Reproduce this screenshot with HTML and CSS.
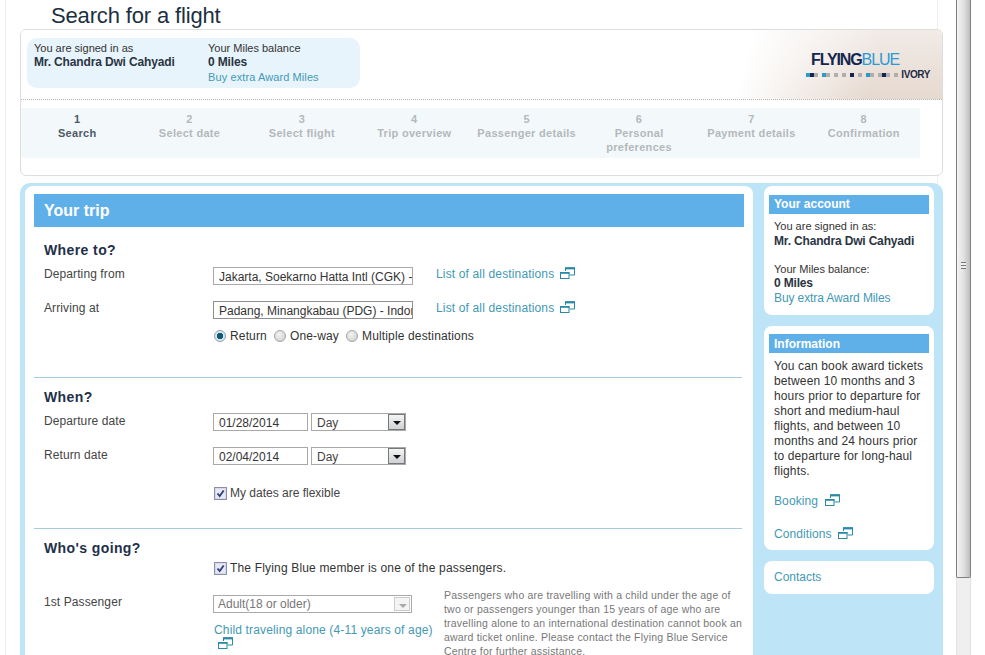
FILE: index.html
```html
<!DOCTYPE html>
<html lang="en">
<head>
<meta charset="utf-8">
<title>Search for a flight</title>
<link rel="stylesheet" href="styles.css">
</head>
<body>
<svg class="defs" width="0" height="0"><defs>
  <g id="win" fill="none" stroke="#2a8aa6">
    <path d="M5.5 4V1h9v7H9.5" />
    <path d="M5 1.3h10" stroke-width="2.2"/>
    <rect x="0.5" y="5.5" width="8.5" height="6"/>
    <path d="M0 6h9.5" stroke-width="1.6"/>
  </g>
  <g id="cb">
    <rect x="0.5" y="0.5" width="12" height="12" fill="#d5d9ee" stroke="#8b90a8"/>
    <rect x="2" y="2" width="9" height="9" fill="#e6e8f5"/>
    <path d="M3.5 6.5l2.2 2.6 4-5.6" fill="none" stroke="#2c3f78" stroke-width="1.8"/>
  </g>
</defs></svg>
<div class="page">
  <h1 class="title">Search for a flight</h1>
  <div class="content">
    <section class="head-card">
      <div class="head-top">
        <div class="pill">
          <div class="pill-col name-col">
            <div>You are signed in as</div>
            <strong>Mr. Chandra Dwi Cahyadi</strong>
          </div>
          <div class="pill-col">
            <div>Your Miles balance</div>
            <strong>0 Miles</strong>
            <a class="link">Buy extra Award Miles</a>
          </div>
        </div>
        <div class="logo">
          <div class="logo-word"><span class="fly">FLYING</span><span class="blue">BLUE</span></div>
          <div class="logo-line">
            <div class="dots">
              <i class="d2"></i><i class="d4"></i><i class="d3"></i><b></b>
              <i class="d2"></i><i class="d3"></i><b></b>
              <i class="d3"></i><b></b>
              <i class="d3"></i><b></b>
              <i class="d4"></i><b></b>
              <i class="d3"></i><b></b>
              <i class="d2"></i><i class="d3"></i><b></b>
              <i class="d3"></i><i class="d4"></i><i class="d3"></i><b></b>
              <i class="d3"></i>
            </div>
            <span class="ivory">IVORY</span>
          </div>
        </div>
      </div>
      <ol class="steps">
        <li class="step current"><span>1</span><span>Search</span></li>
        <li class="step"><span>2</span><span>Select date</span></li>
        <li class="step"><span>3</span><span>Select flight</span></li>
        <li class="step"><span>4</span><span>Trip overview</span></li>
        <li class="step"><span>5</span><span>Passenger details</span></li>
        <li class="step"><span>6</span><span>Personal preferences</span></li>
        <li class="step"><span>7</span><span>Payment details</span></li>
        <li class="step"><span>8</span><span>Confirmation</span></li>
      </ol>
    </section>

    <section class="panel">
      <main class="trip">
        <h2 class="trip-bar">Your trip</h2>

        <div class="sec first">
          <h3>Where to?</h3>
          <div class="row r1">
            <label class="lab">Departing from</label>
            <input class="txt wide" readonly value="Jakarta, Soekarno Hatta Intl (CGK) - Indonesia">
            <a class="link dest">List of all destinations<svg class="win" width="15" height="12"><use href="#win"/></svg></a>
          </div>
          <div class="row r2">
            <label class="lab">Arriving at</label>
            <input class="txt wide dark" readonly value="Padang, Minangkabau (PDG) - Indonesia">
            <a class="link dest">List of all destinations<svg class="win" width="15" height="12"><use href="#win"/></svg></a>
          </div>
          <div class="opts">
            <span class="opt"><i class="radio on"></i>Return</span>
            <span class="opt"><i class="radio"></i>One-way</span>
            <span class="opt"><i class="radio"></i>Multiple destinations</span>
          </div>
        </div>

        <div class="sec when">
          <h3>When?</h3>
          <div class="row d1r">
            <label class="lab">Departure date</label>
            <input class="txt date" readonly value="01/28/2014">
            <div class="sel day"><span>Day</span><i class="arrow"></i></div>
          </div>
          <div class="row d2r">
            <label class="lab">Return date</label>
            <input class="txt date" readonly value="02/04/2014">
            <div class="sel day"><span>Day</span><i class="arrow"></i></div>
          </div>
          <div class="check-row"><svg class="cb" width="13" height="13"><use href="#cb"/></svg>My dates are flexible</div>
        </div>

        <div class="sec who">
          <h3>Who's going?</h3>
          <div class="check-row member"><svg class="cb" width="13" height="13"><use href="#cb"/></svg>The Flying Blue member is one of the passengers.</div>
          <div class="pass">
            <label class="lab">1st Passenger</label>
            <div class="pass-ctl">
              <div class="sel adult"><span>Adult(18 or older)</span><i class="arrow off"></i></div>
              <a class="link child">Child traveling alone (4-11 years of age) <svg class="win" width="15" height="12"><use href="#win"/></svg></a>
            </div>
            <p class="note">Passengers who are travelling with a child under the age of two or passengers younger than 15 years of age who are travelling alone to an international destination cannot book an award ticket online. Please contact the Flying Blue Service Centre for further assistance.</p>
          </div>
        </div>
      </main>

      <aside class="side">
        <div class="card account">
          <h4>Your account</h4>
          <div class="card-body">
            <div>You are signed in as:</div>
            <strong>Mr. Chandra Dwi Cahyadi</strong>
            <div class="gap">Your Miles balance:</div>
            <strong>0 Miles</strong>
            <a class="link">Buy extra Award Miles</a>
          </div>
        </div>
        <div class="card info">
          <h4>Information</h4>
          <div class="card-body">
            <p>You can book award tickets between 10 months and 3 hours prior to departure for short and medium-haul flights, and between 10 months and 24 hours prior to departure for long-haul flights.</p>
            <a class="link ext">Booking <svg class="win" width="15" height="12"><use href="#win"/></svg></a>
            <a class="link ext">Conditions <svg class="win" width="15" height="12"><use href="#win"/></svg></a>
          </div>
        </div>
        <div class="card contacts"><a class="link">Contacts</a></div>
      </aside>
    </section>
  </div>
</div>
<div class="scrollbar">
  <div class="thumb"><span class="grip"></span></div>
</div>
</body>
</html>
```
FILE: styles.css
```css
* { box-sizing: border-box; }
html, body { margin: 0; padding: 0; }
body {
  width: 985px;
  height: 655px;
  overflow: hidden;
  display: flex;
  background: #fff;
  font-family: "Liberation Sans", Arial, sans-serif;
  font-size: 12px;
  line-height: 16px;
  color: #333;
}
.defs { position: absolute; }
.page {
  width: 933px;
  height: 655px;
  margin-left: 5px;
  padding-left: 14px;
  border-left: 1px solid #eee;
  border-right: 1px solid #eee;
  flex: none;
}
.title {
  margin: 0 0 0 31px;
  height: 29px;
  padding-top: 3px;
  font-weight: 400;
  font-size: 22px;
  line-height: 25px;
  letter-spacing: -.15px;
  color: #1c2f42;
}
.content { width: 923px; }
.link { color: #4399b4; }
strong { font-weight: 700; color: #2a3442; }

/* header card */
.head-card {
  height: 147px;
  border: 1px solid #ddd;
  border-radius: 6px;
  background: #fff;
  overflow: hidden;
}
.head-top {
  height: 70px;
  display: flex;
  justify-content: space-between;
  border-bottom: 1px dotted #b5b5b5;
  background: linear-gradient(105deg, #fff 78%, rgba(255,255,255,0) 92%), linear-gradient(to bottom, #f1ebe7, #e6d9cf);
}
.pill {
  width: 333px;
  height: 50px;
  margin: 8px 0 0 6px;
  padding: 3px 7px;
  display: flex;
  border-radius: 10px;
  background: #e8f4fc;
  line-height: 15px;
}
.pill-col { display: flex; flex-direction: column; font-size: 11px; }
.pill-col strong { font-size: 12px; letter-spacing: -.15px; margin-top: -1px; line-height: 15px; }
.pill-col .link { font-size: 11px; letter-spacing: .1px; }
.name-col { width: 174px; }
.logo {
  width: 125px;
  margin-right: 12px;
  padding-top: 21px;
  display: flex;
  flex-direction: column;
  align-items: flex-end;
}
.logo-word {
  width: 119px;
  font-size: 16px;
  line-height: 17px;
  letter-spacing: -1.1px;
  white-space: nowrap;
}
.fly { color: #14264f; font-weight: 700; }
.blue { color: #2a9ad6; }
.logo-line { display: flex; align-items: center; margin-top: 1px; height: 11px; }
.dots { display: flex; align-items: center; margin-right: 3px; }
.dots i, .dots b { display: block; height: 4px; width: 4px; }
.d2 { background: #2d9cc4; }
.d3 { background: #b0aeac; }
.d4 { background: #14264f; }
.ivory { font-size: 10px; font-weight: 700; letter-spacing: -.4px; color: #1e2a44; line-height: 11px; }

/* steps */
.steps {
  list-style: none;
  width: 899px;
  height: 50px;
  margin: 8px 0 0;
  padding: 4px 0 0;
  display: grid;
  grid-template-columns: repeat(8, 1fr);
  background: #f3f8fb;
}
.step {
  display: flex;
  flex-direction: column;
  align-items: center;
  text-align: center;
  font-size: 11px;
  font-weight: 700;
  line-height: 14px;
  letter-spacing: .3px;
  color: #b4b8bb;
  padding: 0 4px;
}
.step.current { color: #4d5a66; }

/* main panel */
.panel {
  height: 473px;
  margin-top: 7px;
  padding: 3px 9px 0 5px;
  display: flex;
  gap: 11px;
  border-radius: 10px 10px 0 0;
  background: #bde4f7;
}
.trip {
  width: 728px;
  height: 480px;
  padding: 8px 9px 0;
  background: #fff;
  border-radius: 8px;
}
.trip-bar {
  margin: 0;
  height: 33px;
  padding-left: 10px;
  background: #5fb0e8;
  color: #fff;
  font-size: 16px;
  line-height: 33px;
}
.sec { padding-left: 10px; margin-right: 2px; }
.sec h3 { margin: 0; font-size: 14px; line-height: 16px; color: #22304a; letter-spacing: .4px; }
.sec.first { padding-top: 15px; }
.sec.when, .sec.who { border-top: 1px solid #a5cde0; padding-top: 11px; }
.sec.when { margin-top: 33px; }
.sec.who { margin-top: 27px; }
.row { display: flex; align-items: flex-start; }
.lab { width: 169px; flex: none; color: #444; letter-spacing: .1px; }
.r1 { margin-top: 8px; height: 34px; }
.r2 { height: 28px; }
.txt {
  display: block;
  margin: 1px 0 0;
  height: 18px;
  padding: 1px 0 0 5px;
  border: 1px solid #a9a9a9;
  background: #fff;
  font: 12px/16px "Liberation Sans", Arial, sans-serif;
  color: #333;
  border-radius: 0;
  outline: 0;
}
.wide { width: 200px; }
.wide.dark { border-color: #8f8f8f; }
.dest { margin-left: 23px; display: flex; align-items: center; gap: 6px; letter-spacing: .15px; }
.win { flex: none; vertical-align: -1px; }
.dest .win { margin-top: -3px; }
.opts { display: flex; height: 16px; padding-left: 170px; gap: 7px; letter-spacing: .15px; }
.opt { display: flex; align-items: center; gap: 4px; }
.radio {
  display: block;
  width: 12px;
  height: 12px;
  border-radius: 50%;
  border: 1px solid #a5a5a5;
  background: radial-gradient(circle at 40% 35%, #f4f4f4, #c9c9c9);
}
.radio.on {
  border-color: #8aa0b0;
  background: radial-gradient(circle, #0f5a78 0 3px, #dfe6ea 3.5px);
}
.when h3 { margin-bottom: 8px; }
.d1r { height: 34px; }
.d2r { height: 38px; }
.date { width: 95px; margin: 0; }
.sel {
  display: flex;
  justify-content: space-between;
  align-items: stretch;
  height: 18px;
  border: 1px solid #a9a9a9;
  background: #fff;
  color: #444;
  line-height: 17px;
}
.sel span { padding: 1px 0 0 4px; }
.day { width: 95px; margin-left: 3px; }
.day span { padding-left: 5px; }
.arrow {
  display: block;
  width: 17px;
  position: relative;
  border: 1px solid #777;
  background: linear-gradient(#f4f4f4, #cfd2d6);
}
.arrow::after {
  content: "";
  position: absolute;
  left: 4px;
  top: 6px;
  border: 4px solid transparent;
  border-top: 4px solid #111;
  border-bottom: 0;
}
.arrow.off { border: 1px solid #ccc; width: 16px; margin: 1px; background: #f4f4f4; }
.arrow.off::after { border-top-color: #aaa; }
.check-row { display: flex; align-items: center; gap: 3px; height: 16px; padding-left: 170px; color: #444; }
.member { margin-top: 4px; color: #333; letter-spacing: .17px; }
.pass { display: flex; align-items: flex-start; margin-top: 18px; }
.pass-ctl { width: 231px; flex: none; }
.adult { width: 199px; margin-top: 1px; height: 18px; color: #777; line-height: 16px; }
.adult span { padding-top: 0; }
.child { display: block; margin: 10px 0 0 1px; line-height: 14px; width: 225px; letter-spacing: .15px; }
.child .win { margin-left: 4px; display: inline-block; vertical-align: -1px; }
.note { margin: -6px 0 0; flex: none; width: 304px; font-size: 10.5px; line-height: 14px; color: #777; letter-spacing: .2px; }

/* sidebar */
.side { width: 170px; flex: none; display: flex; flex-direction: column; gap: 11px; }
.card { background: #fff; border-radius: 8px; padding: 9px 5px 0; }
.card h4 {
  margin: 0;
  height: 19px;
  padding-left: 5px;
  background: #5fb0e8;
  color: #fff;
  font-size: 12px;
  line-height: 19px;
}
.card-body { padding: 4px 5px 0; display: flex; flex-direction: column; line-height: 15px; }
.account { height: 129px; }
.account .card-body div:first-child { font-size: 11px; line-height: 16px; }
.account strong { line-height: 14px; letter-spacing: -.17px; }
.account .gap { margin-top: 14px; font-size: 11px; line-height: 14px; }
.account strong + .link { margin-top: 1px; letter-spacing: -.1px; }
.info { height: 224px; padding-top: 8px; }
.info h4 { line-height: 21px; }
.info .card-body { padding-top: 6px; }
.info p { margin: 0 0 15px; color: #333; letter-spacing: .13px; }
.ext { display: block; height: 33px; letter-spacing: .1px; }
.ext .win { margin-left: 3px; }
.contacts { height: 33px; padding: 8px 10px 0; line-height: 16px; }

/* scrollbar */
.scrollbar {
  width: 15px;
  height: 655px;
  margin-left: 18px;
  flex: none;
  background: #efefef;
  border-left: 1px solid #e2e2e2;
  border-right: 1px solid #e2e2e2;
}
.thumb {
  height: 578px;
  margin: 0 -1px;
  padding-top: 262px;
  display: flex;
  justify-content: center;
  border: 1px solid #808080;
  border-top: 0;
  border-radius: 0 0 2px 2px;
  background: linear-gradient(to right, #f4f4f4, #e2e2e2 50%, #bdbdbd);
}
.grip {
  display: block;
  width: 5px;
  height: 7px;
  background: repeating-linear-gradient(#777 0 1px, #eee 1px 3px);
}
```
